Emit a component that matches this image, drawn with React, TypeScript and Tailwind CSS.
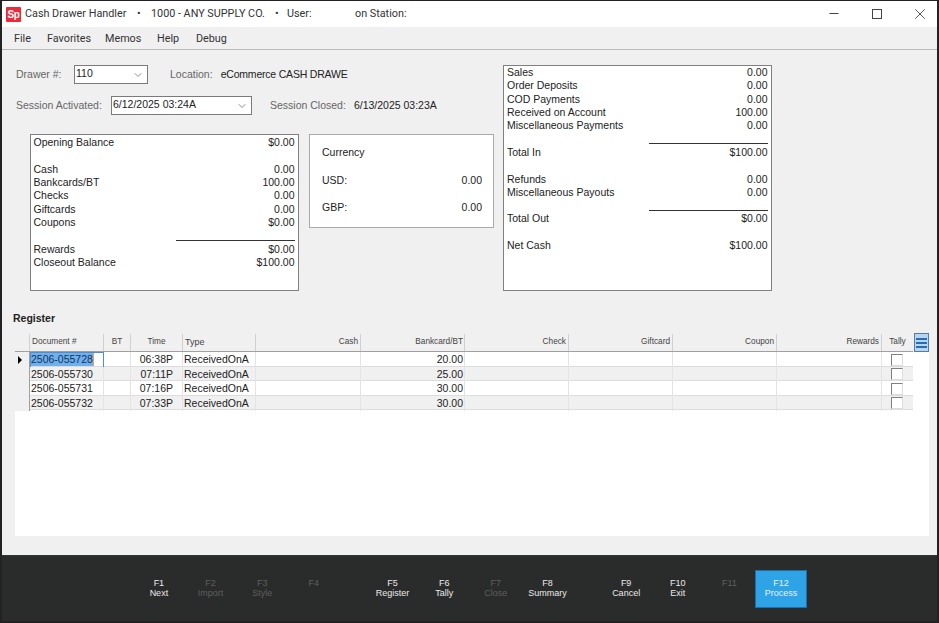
import { ChevronDown } from 'lucide-react'

interface Line {
  label?: string
  value?: string
  rule?: boolean
}

const balanceLines: Line[] = [
  { label: 'Opening Balance', value: '$0.00' },
  {},
  { label: 'Cash', value: '0.00' },
  { label: 'Bankcards/BT', value: '100.00' },
  { label: 'Checks', value: '0.00' },
  { label: 'Giftcards', value: '0.00' },
  { label: 'Coupons', value: '$0.00' },
  { rule: true },
  { label: 'Rewards', value: '$0.00' },
  { label: 'Closeout Balance', value: '$100.00' },
]

const summaryLines: Line[] = [
  { label: 'Sales', value: '0.00' },
  { label: 'Order Deposits', value: '0.00' },
  { label: 'COD Payments', value: '0.00' },
  { label: 'Received on Account', value: '100.00' },
  { label: 'Miscellaneous Payments', value: '0.00' },
  { rule: true },
  { label: 'Total In', value: '$100.00' },
  {},
  { label: 'Refunds', value: '0.00' },
  { label: 'Miscellaneous Payouts', value: '0.00' },
  { rule: true },
  { label: 'Total Out', value: '$0.00' },
  {},
  { label: 'Net Cash', value: '$100.00' },
]

const registerRows = [
  { doc: '2506-055728', time: '06:38P', amount: '20.00' },
  { doc: '2506-055730', time: '07:11P', amount: '25.00' },
  { doc: '2506-055731', time: '07:16P', amount: '30.00' },
  { doc: '2506-055732', time: '07:33P', amount: '30.00' },
]

const keyGroups = [
  [
    { key: 'F1', label: 'Next' },
    { key: 'F2', label: 'Import', off: true },
    { key: 'F3', label: 'Style', off: true },
    { key: 'F4', label: '', off: true },
  ],
  [
    { key: 'F5', label: 'Register' },
    { key: 'F6', label: 'Tally' },
    { key: 'F7', label: 'Close', off: true },
    { key: 'F8', label: 'Summary' },
  ],
  [
    { key: 'F9', label: 'Cancel' },
    { key: 'F10', label: 'Exit' },
    { key: 'F11', label: '', off: true },
    { key: 'F12', label: 'Process', active: true },
  ],
]

const gridCols =
  'grid grid-cols-[15px_74px_27px_52px_73px_105px_104px_104px_104px_104px_105px_31px]'

function Lines({ lines }: { lines: Line[] }) {
  return (
    <div className="flex flex-col">
      {lines.map((line, i) =>
        line.rule ? (
          <div key={i} className="flex h-[13.3px] justify-end">
            <div className="mt-[11px] h-px w-[119px] bg-[#333]" />
          </div>
        ) : (
          <div key={i} className="flex h-[13.3px] items-center justify-between leading-[13px]">
            <span>{line.label}</span>
            <span>{line.value}</span>
          </div>
        ),
      )}
    </div>
  )
}

function Combo({ value, className }: { value: string; className: string }) {
  return (
    <div className={`flex h-[19px] items-center justify-between border border-[#7a7a7a] bg-white pl-[1px] pr-[3px] ${className}`}>
      <span className="-mt-[2px]">{value}</span>
      <ChevronDown size={12} strokeWidth={1.2} className="text-[#444]" />
    </div>
  )
}

export default function App() {
  return (
    <div className="flex h-[623px] w-[939px] flex-col border-t border-l-2 border-r-2 border-b-2 border-[#222] bg-[#f0f0f0] font-['Liberation_Sans',sans-serif] text-[10.5px] text-[#222]">
      <div className="flex h-[26px] shrink-0 items-center bg-white pl-[4px] font-['Roboto',sans-serif] text-[10.8px] text-[#333]">
        <div className="flex h-[15px] w-[15px] items-center justify-center rounded-[1px] bg-[#ee2a3a] font-['Liberation_Sans',sans-serif] text-[10px] font-bold tracking-[-0.5px] text-white">
          Sp
        </div>
        <span className="ml-[4px] w-[112px]">Cash Drawer Handler</span>
        <span className="w-[14px]">•</span>
        <span className="w-[124px]">1000 - ANY SUPPLY CO.</span>
        <span className="w-[12px]">•</span>
        <span className="w-[68px]">User:</span>
        <span>on Station:</span>
        <div className="ml-auto flex items-center gap-[33px] pr-[12px] text-[#444]">
          <svg width="10" height="10" viewBox="0 0 10 10" fill="none" stroke="currentColor">
            <path d="M0.5 4.5h9" />
          </svg>
          <svg width="10" height="10" viewBox="0 0 10 10" fill="none" stroke="currentColor">
            <rect x="0.5" y="0.5" width="9" height="9" />
          </svg>
          <svg width="10" height="10" viewBox="0 0 10 10" fill="none" stroke="currentColor" strokeWidth="0.9">
            <path d="M0.3 0.3l9.4 9.4M9.7 0.3l-9.4 9.4" />
          </svg>
        </div>
      </div>

      <div className="flex h-[23px] shrink-0 items-center border-b border-[#bbb] pl-[12px] pt-[2px] font-['Roboto',sans-serif] text-[10.8px] text-[#333]">
        <span className="w-[33px]">File</span>
        <span className="w-[58px]">Favorites</span>
        <span className="w-[52px]">Memos</span>
        <span className="w-[39px]">Help</span>
        <span>Debug</span>
      </div>

      <div className="flex min-h-0 flex-1 flex-col px-[13px] pt-[15px]">
        <div className="flex h-[226px] shrink-0">
          <div className="w-[488px]">
            <div className="flex h-[19px] items-center">
              <span className="w-[59px] pl-px pt-px text-[#666]">Drawer #:</span>
              <Combo value="110" className="w-[74px]" />
              <span className="ml-[22px] pt-px text-[#666]">Location:</span>
              <span className="ml-[8px] pt-px tracking-[-0.2px]">eCommerce CASH DRAWE</span>
            </div>
            <div className="mt-[12px] flex h-[19px] items-center">
              <span className="w-[96px] pl-px pt-px text-[#666]">Session Activated:</span>
              <Combo value="6/12/2025 03:24A" className="w-[141px]" />
              <span className="ml-[18px] pt-px text-[#666]">Session Closed:</span>
              <span className="ml-[8px] pt-px">6/13/2025 03:23A</span>
            </div>
            <div className="mt-[19px] flex items-start pl-[15px]">
              <div className="h-[157px] w-[269px] border border-[#808080] bg-white pl-[2.5px] pr-[3.5px] py-px">
                <Lines lines={balanceLines} />
              </div>
              <div className="ml-[10px] flex h-[94px] w-[185px] flex-col border border-[#aaa] bg-white pl-[12px] pr-[11px] pt-[10px]">
                <div>Currency</div>
                <div className="mt-[12px] flex justify-between">
                  <span>USD:</span>
                  <span>0.00</span>
                </div>
                <div className="mt-[11px] flex justify-between">
                  <span>GBP:</span>
                  <span>0.00</span>
                </div>
              </div>
            </div>
          </div>
          <div className="h-[226px] w-[269px] border border-[#808080] bg-white pl-[3px] pr-[3.5px]">
            <Lines lines={summaryLines} />
          </div>
        </div>

        <div className="-ml-[2px] mt-[21px] h-[13px] font-bold leading-[13px] text-[#222]">Register</div>

        <div className="mt-[8px] flex h-[203px] w-[914px] flex-col bg-white">
          <div className="flex h-[19px] shrink-0 bg-[#f0f0f0]">
            <div className={`${gridCols} w-[898px] border-b border-[#a0a0a0] pt-px text-[8.25px] text-[#444]`}>
              <div className="border-r border-[#d0d0d0]" />
              <div className="flex items-center border-r border-[#d0d0d0] pl-[2px]">Document #</div>
              <div className="flex items-center justify-center border-r border-[#d0d0d0]">BT</div>
              <div className="flex items-center justify-center border-r border-[#d0d0d0]">Time</div>
              <div className="flex items-center border-r border-[#d0d0d0] pl-[2px] text-[9px]">Type</div>
              <div className="flex items-center justify-end border-r border-[#d0d0d0] pr-[2px]">Cash</div>
              <div className="flex items-center justify-end border-r border-[#d0d0d0] pr-[1px]">Bankcard/BT</div>
              <div className="flex items-center justify-end border-r border-[#d0d0d0] pr-[2px]">Check</div>
              <div className="flex items-center justify-end border-r border-[#d0d0d0] pr-[2px]">Giftcard</div>
              <div className="flex items-center justify-end border-r border-[#d0d0d0] pr-[2px]">Coupon</div>
              <div className="flex items-center justify-end border-r border-[#d0d0d0] pr-[2px]">Rewards</div>
              <div className="flex items-center justify-center">Tally</div>
            </div>
            <div className="ml-px flex w-[15px] flex-col items-center justify-center gap-[2px] border border-[#5a7a9a] bg-[#b5d5f2]">
              <div className="h-[2px] w-[11px] bg-[#2a6cb0]" />
              <div className="h-[2px] w-[11px] bg-[#2a6cb0]" />
              <div className="h-[2px] w-[11px] bg-[#2a6cb0]" />
            </div>
          </div>

          {registerRows.map((row, i) => (
            <div
              key={row.doc}
              className={`${gridCols} h-[14.5px] w-[898px] shrink-0 border-b border-[#dcdcdc] ${i % 2 ? 'bg-[#f0f0f0]' : 'bg-white'}`}
            >
              <div className="flex items-center justify-center border-r border-[#a0a0a0] bg-[#f0f0f0] pr-[5px]">
                {i === 0 && <div className="h-0 w-0 border-y-[4px] border-l-[4px] border-y-transparent border-l-black" />}
              </div>
              <div className={`flex items-center border-r border-[#e4e4e4] pl-px leading-[13px] ${i === 0 ? 'outline outline-[#4a90d9] -outline-offset-1' : ''}`}>
                <span className={i === 0 ? 'border-r border-[#e8a060] bg-[#6fb0ec] text-[#14325c]' : ''}>{row.doc}</span>
              </div>
              <div className="border-r border-[#e4e4e4]" />
              <div className="flex items-center justify-end border-r border-[#e4e4e4] pr-[9px]">{row.time}</div>
              <div className="flex items-center border-r border-[#e4e4e4] pl-px">ReceivedOnA</div>
              <div className="border-r border-[#e4e4e4]" />
              <div className="flex items-center justify-end border-r border-[#e4e4e4] pr-[1px]">{row.amount}</div>
              <div className="border-r border-[#e4e4e4]" />
              <div className="border-r border-[#e4e4e4]" />
              <div className="border-r border-[#e4e4e4]" />
              <div className="border-r border-[#e4e4e4]" />
              <div className="flex items-center justify-center pr-[2px]">
                <div className="h-[12px] w-[12px] border border-t-[#808080] border-l-[#808080] border-r-[#ddd] border-b-[#ddd] bg-white" />
              </div>
            </div>
          ))}
        </div>
      </div>

      <div className="flex h-[66px] shrink-0 items-center justify-center gap-[27px] border-t border-[#333] bg-[#2a2b2b] pl-[1px] text-[9px] leading-[10px]">
        {keyGroups.map((group, g) => (
          <div key={g} className="flex">
            {group.map((k) => (
              <div
                key={k.key}
                className={`flex h-[38px] w-[51.67px] flex-col items-center justify-center pb-[2px] ${
                  k.active ? 'border border-[#1d6ea8] bg-[#2ea3e6] text-[#e6f4fc]' : k.off ? 'text-[#5f5f5f]' : 'text-[#eaeaea]'
                }`}
              >
                <span>{k.key}</span>
                <span className="h-[10px]">{k.label}</span>
              </div>
            ))}
          </div>
        ))}
      </div>
    </div>
  )
}
